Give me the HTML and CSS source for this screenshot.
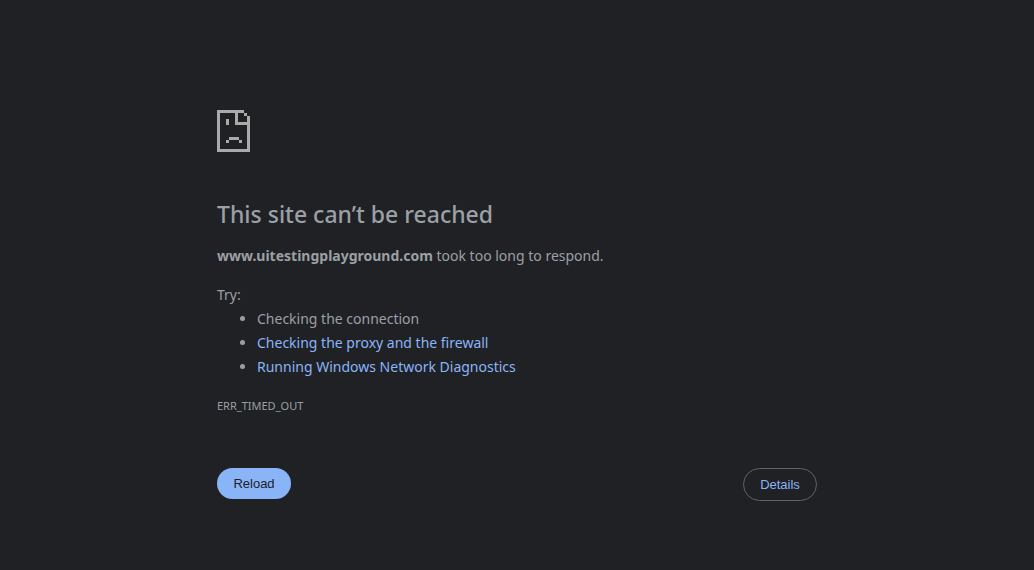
FILE: index.html
```html
<!DOCTYPE html>
<html lang="en">
<head>
<meta charset="utf-8">
<title>www.uitestingplayground.com</title>
<link rel="stylesheet" href="styles.css">
</head>
<body>
<main class="error-page">
  <svg class="error-icon" viewBox="0 0 33 42" shape-rendering="crispEdges" aria-hidden="true">
    <path d="M0 0H27V3H21V12H30V6H33V42H0ZM3 3V39H30V15H18V3ZM27 3H30V6H27ZM9 9H12V15H9ZM12 27H22V30H12ZM9 30H12V33H9ZM22 30H25V33H22Z" fill-rule="evenodd"/>
  </svg>
  <h1 class="title">This site can’t be reached</h1>
  <p class="summary"><strong>www.uitestingplayground.com</strong> took too long to respond.</p>
  <section class="suggestions">
    <p class="suggestions-label">Try:</p>
    <ul class="suggestions-list">
      <li>Checking the connection</li>
      <li><a class="link" href="#proxy">Checking the proxy and the firewall</a></li>
      <li><a class="link" href="#diagnostics">Running Windows Network Diagnostics</a></li>
    </ul>
  </section>
  <p class="error-code">ERR_TIMED_OUT</p>
  <div class="actions">
    <button class="button button-primary" type="button">Reload</button>
    <button class="button button-secondary" type="button">Details</button>
  </div>
</main>
</body>
</html>
```
FILE: styles.css
```css
body {
  margin: 0;
  background: #202124;
  color: #9aa0a6;
  font-family: "Segoe UI", "Noto Sans", "Open Sans", sans-serif;
  font-size: 14px;
  line-height: 24px;
}

.error-page {
  box-sizing: border-box;
  max-width: 600px;
  margin: 0 auto;
  padding-top: 110px;
}

.error-icon {
  display: block;
  width: 33px;
  height: 42px;
  fill: #aaaaaa;
}

.title {
  margin: 48px 0 16px;
  font-size: 23px;
  font-weight: 500;
  line-height: 28px;
}

.summary,
.suggestions-label,
.error-code {
  margin: 0;
}

.suggestions {
  margin-top: 15px;
}

.suggestions-list {
  margin: 0;
  padding-left: 40px;
}

.link {
  color: #8ab4f8;
  text-decoration: none;
}

.error-code {
  margin-top: 15px;
  font-size: 11px;
}

.actions {
  display: flex;
  justify-content: space-between;
  align-items: flex-start;
  margin-top: 50px;
}

.button {
  min-width: 74px;
  padding: 8px 15px;
  border: 0;
  border-radius: 20px;
  font-family: "Liberation Sans", Arial, sans-serif;
  font-size: 13px;
  line-height: 15px;
  cursor: pointer;
}

.button-primary {
  background: #8ab4f8;
  color: #202124;
}

.button-secondary {
  border: 1px solid #5f6368;
  background: transparent;
  color: #8ab4f8;
}
```
